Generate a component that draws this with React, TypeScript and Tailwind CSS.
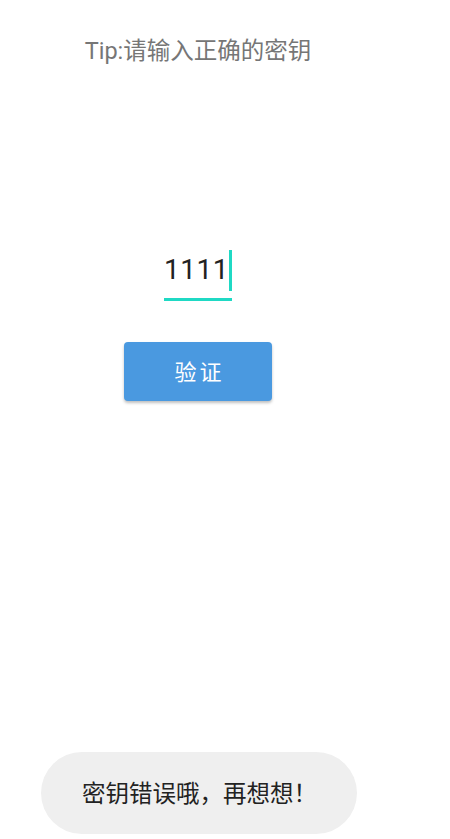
export default function App() {
  const font = { fontFamily: "Roboto, 'Noto Sans CJK SC', sans-serif" };

  return (
    <div className="relative h-[839px] w-[450px] overflow-hidden bg-white" style={font}>
      <div className="flex w-[396px] flex-col items-center">
        {/* Tip */}
        <p className="mt-[35px] text-[23.5px] leading-[32px] text-[#767676]">Tip:请输入正确的密钥</p>

        {/* Key input */}
        <div className="mt-[181px] flex w-[68px] flex-col">
          <div className="flex h-[44px] items-center justify-end">
            <span className="whitespace-nowrap text-[28px] leading-none tracking-[0.5px] text-[#222]">1111</span>
            <span className="h-[41px] w-[3px] shrink-0 bg-[#1fd9c4]" />
          </div>
          <div className="mt-[6px] h-[3px] w-full bg-[#1fd9c4]" />
        </div>

        {/* Verify button */}
        <button className="mt-[41px] flex h-[59px] w-[148px] items-center justify-center rounded-[4px] bg-[#4a99e0] pl-[3px] pt-[2px] text-[22px] tracking-[3px] text-white shadow-[0_2px_3px_rgba(0,0,0,0.25)]">
          验证
        </button>
      </div>

      {/* Toast */}
      <div className="absolute left-[41px] top-[752px] flex h-[82px] w-[316px] items-center rounded-full bg-[#efefef] pl-[41px] pt-[3px]">
        <span className="text-[23.5px] leading-none text-[#222]">密钥错误哦，再想想！</span>
      </div>
    </div>
  );
}
